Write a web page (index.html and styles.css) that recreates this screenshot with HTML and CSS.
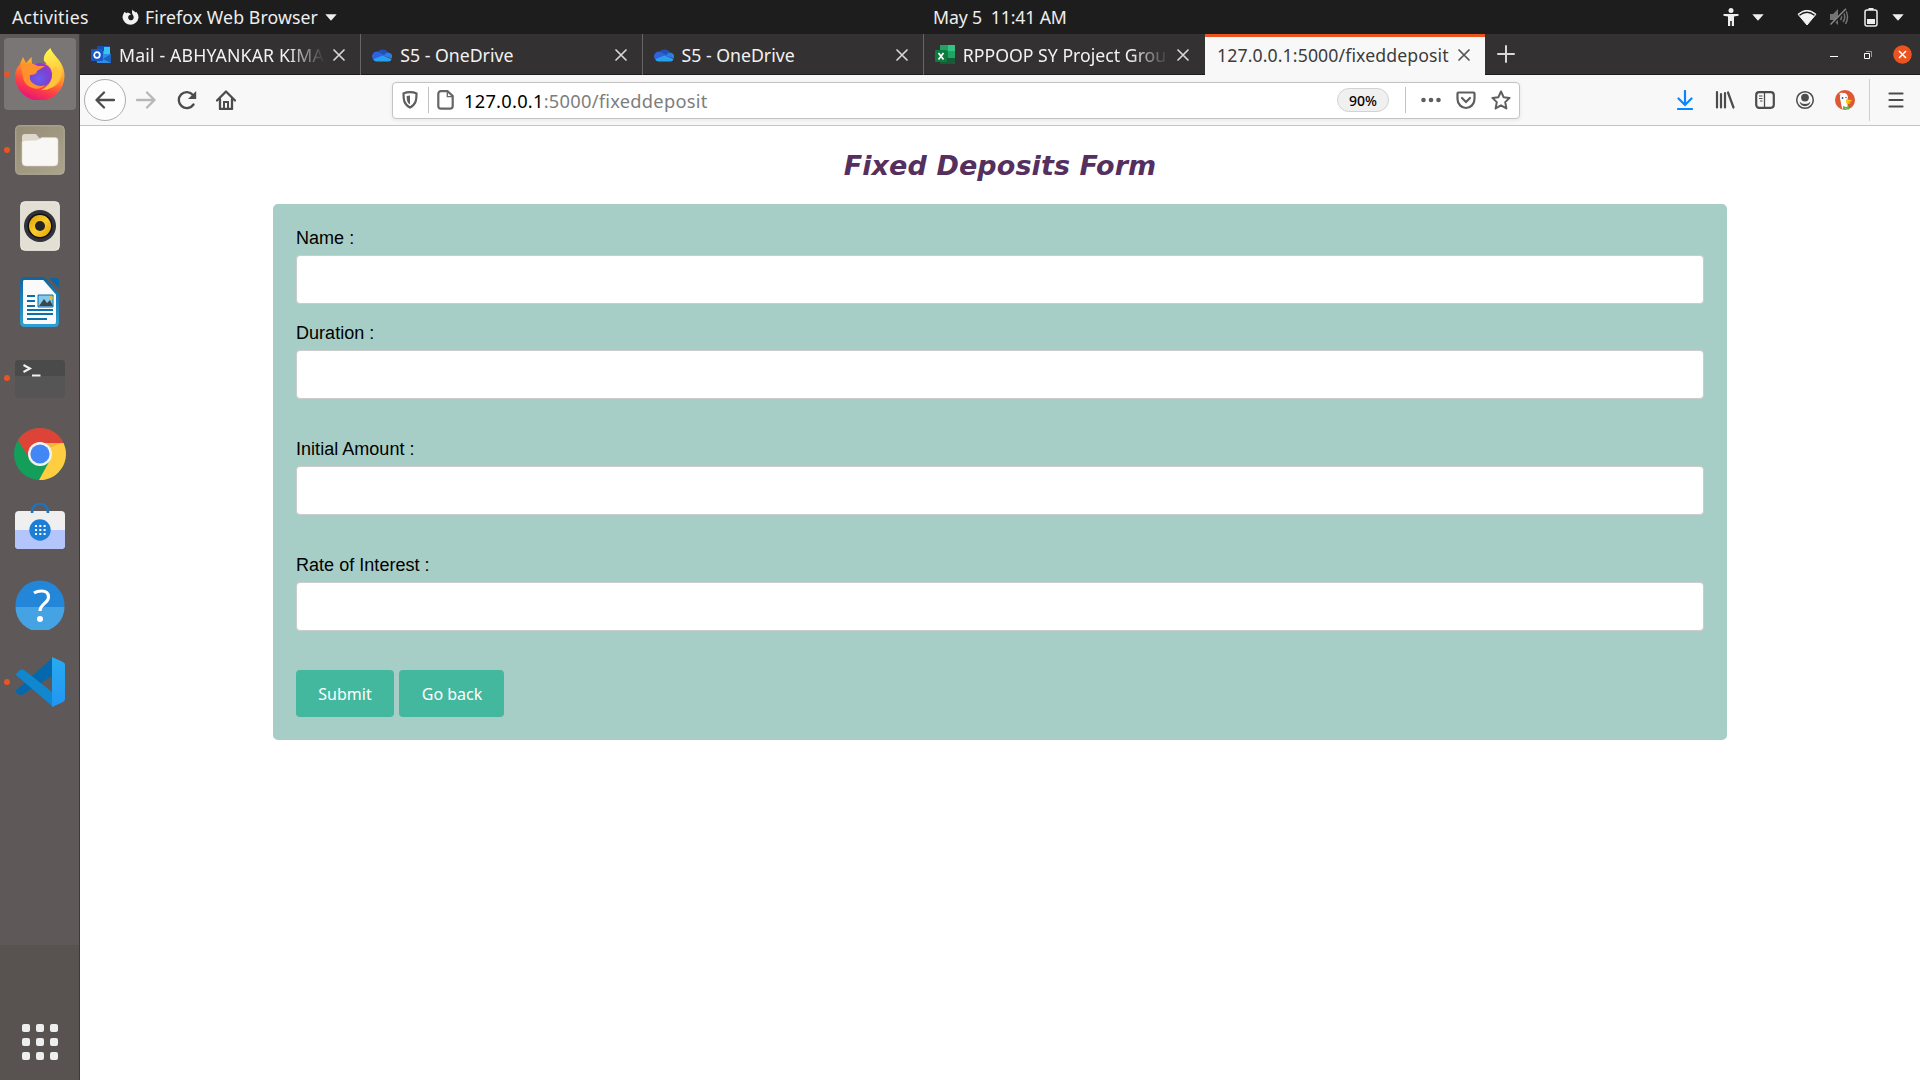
FILE: index.html
```html
<!DOCTYPE html>
<html lang="en">
<head>
<meta charset="utf-8">
<title>Fixed Deposits Form</title>
<link rel="stylesheet" href="styles.css">
</head>
<body>
<svg class="defs" width="0" height="0">
  <defs>
    <linearGradient id="fxBody" x1=".75" y1="0" x2=".35" y2="1"><stop offset="0" stop-color="#fff14f"/><stop offset=".4" stop-color="#ffa22a"/><stop offset=".72" stop-color="#ff453f"/><stop offset="1" stop-color="#e8117a"/></linearGradient>
    <linearGradient id="fxFlame" x1=".5" y1="0" x2=".7" y2="1"><stop offset="0" stop-color="#fff44f"/><stop offset="1" stop-color="#ffb02e"/></linearGradient>
    <radialGradient id="fxGlobe" cx=".45" cy=".65" r=".7"><stop offset="0" stop-color="#6a5cf0"/><stop offset=".6" stop-color="#7a42cf"/><stop offset="1" stop-color="#a432dc"/></radialGradient>
    <linearGradient id="gold" x1="0" y1="0" x2="1" y2="1"><stop offset="0" stop-color="#d99b08"/><stop offset=".5" stop-color="#fccd2a"/><stop offset="1" stop-color="#dfa20c"/></linearGradient>
    <linearGradient id="writerEdge" x1="0" y1="0" x2="0" y2="1"><stop offset="0" stop-color="#0f669f"/><stop offset="1" stop-color="#2e9fd4"/></linearGradient>
    <linearGradient id="files" x1="0" y1="0" x2="1" y2="1"><stop offset="0" stop-color="#958c75"/><stop offset="1" stop-color="#aca38d"/></linearGradient>
    <linearGradient id="codeBlue" x1="0" y1="0" x2="0" y2="1"><stop offset="0" stop-color="#29aaf0"/><stop offset="1" stop-color="#2196f3"/></linearGradient>
    <symbol id="cloud" viewBox="0 0 20 14">
      <path d="M5 5a6 5.600 0 0 1 11-.2L10 9z" fill="#2150b8"/>
      <path d="M1 11a4.600 4.600 0 0 1 5.500-7L14 8 3 12.500z" fill="#2f62dc"/>
      <path d="M13 6a4 4 0 0 1 7 3.500v1L12 8z" fill="#2d7ce6"/>
      <path d="M1.200 11.200 10.500 7.500l9 3.600A3 3 0 0 1 17 13.500H4.500a4 4 0 0 1-3.300-2.300z" fill="#28a0ee"/>
    </symbol>
    <symbol id="cross" viewBox="0 0 12 12"><path d="M1 1l10 10M11 1L1 11" fill="none" stroke="currentColor" stroke-width="1.700" stroke-linecap="round"/></symbol>
    <symbol id="caret" viewBox="0 0 12 7"><path d="M.3.300h11.400L6 6.700z" fill="currentColor"/></symbol>
  </defs>
</svg>
<div class="desktop">
  <header class="panel">
    <span class="activities">Activities</span>
    <div class="app-menu">
      <svg class="app-icon" viewBox="0 0 16 16"><path d="M2.500 2.600 4 3.900c.5-.3 1-.5 1.600-.5L8.600 5 6.500 6.100C5 8 6.300 10.600 8.300 10.600c2.200 0 3.300-2.300 2.400-4.100C10.300 5.400 8.700 4.300 9.800.500c.5 1.300 2 1.700 3.200 2.800l.4-.6c1.500 1.700 2.300 3.500 2.100 5.800a7.600 7.600 0 0 1-15-.2c-.1-2.200.8-3.700 2-5.700z" fill="#f2f2f2"/></svg>
      <span class="app-name">Firefox Web Browser</span>
      <svg class="caret"><use href="#caret"/></svg>
    </div>
    <span class="clock">May 5&nbsp; 11:41 AM</span>
    <div class="status">
      <svg width="16" height="18" viewBox="0 0 16 18"><circle cx="8" cy="2.600" r="2.500" fill="#eee"/><path d="M.5 6h15v1.700l-4.500.7V18H8.800v-5H7.200v5H5V8.400L.5 7.700z" fill="#eee"/></svg>
      <svg class="caret c1"><use href="#caret"/></svg>
      <svg class="wifi" width="20" height="17" viewBox="0 0 20 17"><path d="M1 5.200Q10-2.500 19 5.200L10 16z" fill="#f2f2f2" stroke="#f2f2f2"/><path d="M2.500 6.200q7.500-6 15 0" fill="none" stroke="#1d1d1d" stroke-width="1.400"/></svg>
      <svg class="vol" width="20" height="18" viewBox="0 0 20 18"><path d="M1 6h3l5-5v16l-5-5H1z" fill="#737373"/><path d="M11.500 6q2 3 0 6M14 4q3.500 5 0 10M16.500 2q4 7 0 14" fill="none" stroke="#737373" stroke-width="1.500"/><path d="M2 17.500 17.500 1" stroke="#1d1d1d" stroke-width="2.500"/><path d="M1.500 16.500 17 .700" stroke="#8a8a8a" stroke-width="1.400"/></svg>
      <svg class="bat" width="14" height="19" viewBox="0 0 14 19"><path d="M4.500 0h5v2h-5z" fill="#eee"/><rect x="1" y="2" width="12" height="16" rx="2" fill="none" stroke="#eee" stroke-width="1.500"/><path d="M3 11h8v5H3z" fill="#eee"/></svg>
      <svg class="caret c2"><use href="#caret"/></svg>
    </div>
  </header>
  <div class="workspace">
    <nav class="dock">
      <div class="dock-item active running">
        <svg width="52" height="52" viewBox="0 0 52 52"><path d="M5 18 9 9l3 6 5.500-6 .5 8 14-1c-2-6 1-12 4.500-15 1 5 5 9 6.500 14l1-4c4 5 6.500 10 6.500 17a24.700 24.700 0 0 1-49.500 0c0-4 1-7 3.500-10z" fill="url(#fxBody)"/><path d="M30 13C29 7 33 3 36.500 0 38 7 48 10 48 24c0 10-8 18-17 16 10-3 13-17-1-27z" fill="url(#fxFlame)"/><circle cx="26" cy="27" r="12" fill="url(#fxGlobe)"/><path d="M7 17 17 15l7 3h7l-8 5c0 3-4 4-7 4-2 8 8 13 15 10-7 8-21 2-22-8z" fill="#ff922c"/><path d="m34 12 4 9q3-1 4-3 5 8 1 16-6 9-16 8 9-4 11-12 1-11-4-18z" fill="#ffc53a"/></svg>
      </div>
      <div class="dock-item running">
        <svg width="50" height="50" viewBox="0 0 50 50"><rect x=".7" y=".7" width="48.600" height="48.600" rx="4" fill="url(#files)" stroke="#b5ae9d"/><path d="M7 27V12q0-3 3-3h11l4 5v13z" fill="#ddd8cb"/><path d="M7 17q0-1 3-1.500l12-.5 5-2.500h13q3 0 3 3V37q0 4-4 4H11q-4 0-4-4z" fill="#f8f7f5" stroke="#d8d3c6" stroke-width=".6"/></svg>
      </div>
      <div class="dock-item">
        <svg width="40" height="50" viewBox="0 0 40 50"><rect x=".7" y=".7" width="38.600" height="48.600" rx="4" fill="#e3dfd4" stroke="#f1eee5"/><circle cx="20" cy="25" r="16" fill="#31323b"/><circle cx="20" cy="25" r="12.500" fill="#111"/><circle cx="20" cy="25" r="11" fill="url(#gold)"/><circle cx="20" cy="25" r="5" fill="#252525"/></svg>
      </div>
      <div class="dock-item">
        <svg width="40" height="50" viewBox="0 0 40 50"><path d="M4 1.500h20L37.500 17v28q0 3.500-3 3.500H5q-3.500 0-3.500-3.500V5q0-3.500 2.500-3.500z" fill="#fafafa" stroke="url(#writerEdge)" stroke-width="3"/><path d="M29 1h7q3 0 3 3v7z" fill="#0d65a4"/><path d="M7 19h8M7 24h8M7 29h8M7 33h26M7 37h26M7 42h20" stroke="#0d6faa" stroke-width="2"/><path d="M18 18h15v12H18z" fill="#84c9ee" stroke="#0d6faa"/><path d="m19 29 5-7 3 4 3-3 3 6z" fill="#3f4447"/><circle cx="31" cy="21" r="2" fill="#e8bd35"/></svg>
      </div>
      <div class="dock-item running terminal">
        <svg width="50" height="38" viewBox="0 0 50 38"><rect width="50" height="38" rx="4" fill="#555"/><path d="M0 16V4q0-4 4-4h42q4 0 4 4v12z" fill="#4a4a4a"/><path d="m8.500 5 6.500 3.500L8.500 12M17 15.500h8.500" fill="none" stroke="#f2f2f2" stroke-width="2"/></svg>
      </div>
      <div class="dock-item">
        <svg width="52" height="52" viewBox="0 0 52 52"><circle cx="26" cy="26" r="26" fill="#139e5a"/><path d="M4 12A26 26 0 0 1 49.500 15H26L16 32z" fill="#dd4437"/><path d="M26 15h23.500A26 26 0 0 1 25 52l11-20z" fill="#ffcd40"/><path d="M26 15h22l-13 5z" fill="#e5a82b" opacity=".6"/><circle cx="26" cy="26" r="12" fill="#f2f2f2"/><circle cx="26" cy="26" r="9.600" fill="#4386f5"/></svg>
      </div>
      <div class="dock-item software">
        <svg width="50" height="48" viewBox="0 0 50 48"><rect y="9" width="50" height="38" rx="4" fill="#efefef"/><path d="M0 28h50v15q0 4-4 4H4q-4 0-4-4z" fill="#b3c5fb"/><path d="M17 11q0-9 8-9t8 9" fill="none" stroke="#1f72b8" stroke-width="2.600"/><circle cx="25" cy="28" r="10.700" fill="#1b7fd7"/><path d="M20 24h11M20 28h11M20 32h11" stroke="#fff" stroke-width="2" stroke-dasharray="2 2.300"/></svg>
      </div>
      <div class="dock-item help">
        <svg width="50" height="50" viewBox="0 0 50 50"><circle cx="25" cy="25" r="24.500" fill="#2386d8"/><path d="M.5 27h49a24.500 24.500 0 0 1-49 0z" fill="#45a2e3"/><path d="M19 13q3-2 7.500-2c5 0 7 2.500 7 6 0 6-8.500 7-8.500 14" fill="none" stroke="#fff" stroke-width="3.200"/><circle cx="25" cy="39" r="3" fill="#fff"/></svg>
      </div>
      <div class="dock-item running">
        <svg width="50" height="50" viewBox="0 0 50 50"><path d="m1 33 5-4L37 1v18L7 38q-2 1-4-1l-2-2z" fill="#0668ac"/><path d="m1 17 4-4q2-1 4 0l28 22v14L1 18z" fill="#1187cf"/><path d="m37 0 11 5q2 1 2 3v34q0 2-2 3l-11 5z" fill="url(#codeBlue)"/></svg>
      </div>
      <div class="show-apps"><i></i><i></i><i></i><i></i><i></i><i></i><i></i><i></i><i></i></div>
    </nav>
    <section class="browser">
      <div class="tabs">
        <div class="tab">
          <svg class="favicon" viewBox="0 0 20 20"><path d="M6 2h13v8H6z" fill="#1aa8ea"/><path d="M6 1h13v5H6z" fill="#174fae"/><path d="M13 2h6v7h-6z" fill="#36c5f2"/><path d="M5 9h15v8q0 1-1 1H6z" fill="#2e8de4"/><path d="m20 9-8 5 8 4z" fill="#1e62be"/><rect y="4" width="12" height="12" rx="1" fill="#1759c9"/><circle cx="6" cy="10" r="2.800" fill="none" stroke="#fff" stroke-width="1.700"/></svg>
          <span class="title fade mail">Mail - ABHYANKAR KIMA</span><svg class="close"><use href="#cross"/></svg>
        </div>
        <div class="tab">
          <svg class="favicon" viewBox="0 0 20 14"><use href="#cloud"/></svg>
          <span class="title drive">S5 - OneDrive</span><svg class="close"><use href="#cross"/></svg>
        </div>
        <div class="tab">
          <svg class="favicon" viewBox="0 0 20 14"><use href="#cloud"/></svg>
          <span class="title drive">S5 - OneDrive</span><svg class="close"><use href="#cross"/></svg>
        </div>
        <div class="tab">
          <svg class="favicon" viewBox="0 0 20 20"><path d="M5 0h15v19H5z" fill="#107c41"/><path d="M5 0h8v6H5z" fill="#21a366"/><path d="M13 0h7v6h-7z" fill="#33c481"/><path d="M13 6h7v7h-7z" fill="#21a366"/><path d="M5 13h15v6H5z" fill="#185c37"/><rect y="5" width="12" height="12" rx="1" fill="#0f7a3e"/><path d="m3.500 8 5 6.500m0-6.500-5 6.500" stroke="#fff" stroke-width="1.700"/></svg>
          <span class="title fade sheet">RPPOOP SY Project Grou</span><svg class="close"><use href="#cross"/></svg>
        </div>
        <div class="tab current"><span class="title local">127.0.0.1:5000/fixeddeposit</span><svg class="close"><use href="#cross"/></svg></div>
        <svg class="new-tab" width="18" height="18" viewBox="0 0 18 18"><path d="M9 1v16M1 9h16" stroke="#d8d8d8" stroke-width="2" stroke-linecap="round"/></svg>
        <div class="window-controls">
          <svg width="8" height="6" viewBox="0 0 8 6"><path d="M0 4.500h8" stroke="#fff"/></svg>
          <svg width="8" height="8" viewBox="0 0 8 8"><path d="M2 .5h5.500V6" fill="none" stroke="#999"/><path d="M.5 2.500h5v5h-5z" fill="none" stroke="#fff"/></svg>
          <svg width="19" height="19" viewBox="0 0 19 19"><circle cx="9.500" cy="9.500" r="9.300" fill="#e95420"/><path d="m6 6 7 7m0-7-7 7" stroke="#fff" stroke-width="1.500"/></svg>
        </div>
      </div>
      <div class="toolbar">
        <div class="nav-buttons">
          <span class="back"><svg width="20" height="18" viewBox="0 0 20 18"><path d="M19 9H2M9 1.500 1.500 9 9 16.500" fill="none" stroke="#4c4c4c" stroke-width="2.300" stroke-linecap="round" stroke-linejoin="round"/></svg></span>
          <svg class="forward" width="20" height="18" viewBox="0 0 20 18"><path d="M1 9h17M11 1.500 18.500 9 11 16.500" fill="none" stroke="#b7b7b7" stroke-width="2.300" stroke-linecap="round" stroke-linejoin="round"/></svg>
          <svg class="reload" width="20" height="20" viewBox="0 0 20 20"><path d="M16.500 14.500a8 8 0 1 1-.5-9.500" fill="none" stroke="#4c4c4c" stroke-width="2.400" stroke-linecap="round"/><path d="M19.200 1v8H11z" fill="#4c4c4c"/></svg>
          <svg class="home" width="20" height="20" viewBox="0 0 20 20"><path d="M1 10.500 10 1.500l9 9M4 9v10h12V9" fill="none" stroke="#4c4c4c" stroke-width="2.300" stroke-linecap="round" stroke-linejoin="round"/><path d="M8 19v-7h4v7" fill="none" stroke="#4c4c4c" stroke-width="2"/></svg>
        </div>
        <div class="urlbar">
          <svg class="shield" width="16" height="18" viewBox="0 0 16 18"><path d="M8 1.200c2.500 0 4.500.3 6.500 1.200 0 6 0 10.500-6.500 14.200C1.500 12.900 1.500 8.400 1.500 2.400 3.500 1.500 5.500 1.200 8 1.200z" fill="none" stroke="#5e5e5e" stroke-width="2.200"/><path d="M8 4.500v9C5 11.500 4.700 9 4.700 5z" fill="#5e5e5e"/></svg>
          <i class="divider"></i>
          <svg class="page" width="17" height="20" viewBox="0 0 17 20"><path d="M4 1.200h6.500L15.700 6v10q0 2.700-2.700 2.700H4q-2.700 0-2.700-2.700V4Q1.300 1.200 4 1.200z" fill="none" stroke="#666" stroke-width="2.200"/><path d="M10.300 1.500v5.200h5" fill="none" stroke="#666" stroke-width="1.300"/></svg>
          <span class="url"><b>127.0.0.1</b>:5000/fixeddeposit</span>
          <span class="zoom-level"><em>90%</em></span>
          <i class="divider"></i>
          <svg class="more" width="20" height="6" viewBox="0 0 20 6"><g fill="#5e5e5e"><circle cx="2.500" cy="3" r="2.300"/><circle cx="10" cy="3" r="2.300"/><circle cx="17.500" cy="3" r="2.300"/></g></svg>
          <svg class="pocket" width="20" height="20" viewBox="0 0 20 20"><path d="M2.500 2.500h15q1 0 1 1V9c0 5-4 9-8.500 9S1.500 14 1.500 9V3.500q0-1 1-1z" fill="none" stroke="#5e5e5e" stroke-width="2.200"/><path d="m6 8 4 4 4-4" fill="none" stroke="#5e5e5e" stroke-width="2.200" stroke-linecap="round"/></svg>
          <svg class="star" width="20" height="20" viewBox="0 0 20 20"><path d="m10 1.500 2.600 5.700 6 .7-4.400 4.200 1.200 6.300-5.400-3.100-5.400 3.100 1.200-6.300L1.400 7.900l6-.7z" fill="none" stroke="#5e5e5e" stroke-width="2" stroke-linejoin="round"/></svg>
        </div>
        <div class="tools">
          <svg width="20" height="20" viewBox="0 0 20 20"><path d="M10 1v13M3.500 8.500 10 15l6.500-6.500M3 19h14" fill="none" stroke="#0a84ff" stroke-width="2.200" stroke-linecap="round"/></svg>
          <svg width="20" height="20" viewBox="0 0 20 20"><path d="M2 2v15.500M6 4v13.500M10 3v14.500M13 2.500l5.500 15" fill="none" stroke="#4c4c4c" stroke-width="2.200" stroke-linecap="round"/></svg>
          <svg width="20" height="20" viewBox="0 0 20 20"><rect x="1.200" y="2.200" width="17.600" height="15.600" rx="3" fill="none" stroke="#4c4c4c" stroke-width="2.200"/><path d="M9.500 2v16" stroke="#4c4c4c" stroke-width="1.300"/><path d="M4 6h3.500M4 8.500h3.500M5 11h2.500" stroke="#4c4c4c"/></svg>
          <svg width="20" height="20" viewBox="0 0 20 20"><circle cx="10" cy="10" r="8.300" fill="none" stroke="#4c4c4c" stroke-width="1.500"/><circle cx="10" cy="7.600" r="3.900" fill="#4c4c4c"/><path d="M4.500 11.500q2 2.500 5.500 2.500t5.500-2.500q-1 4.500-5.500 4.700-4.500-.2-5.500-4.700z" fill="#4c4c4c"/></svg>
          <svg width="20" height="20" viewBox="0 0 20 20"><circle cx="10" cy="10" r="10" fill="#de5833"/><path d="M7 18.500 5 8q-.5-4 3-5 4-.5 5 4l-1 4 1 7q-3 2-6 .500z" fill="#fff"/><path d="M4 4q2-2 4-1L6 5z" fill="#fff"/><path d="M11 9.500q4 0 6 .8-1 2-4 1.400 2 1.300 3 1-2 2-5 0z" fill="#fdc70e"/><path d="m8 16 3 1 3-1v3.500l-3-1-3 1z" fill="#5fb445"/><circle cx="7.500" cy="8" r=".9" fill="#2d4f8e"/><circle cx="11" cy="7.500" r=".7" fill="#2d4f8e"/></svg>
          <i class="tool-divider"></i>
          <svg class="menu" width="16" height="16" viewBox="0 0 16 16"><path d="M1.500 1.500h13M1.500 8h13M1.500 14.500h13" stroke="#4c4c4c" stroke-width="2.200" stroke-linecap="round"/></svg>
        </div>
      </div>
      <main class="page-body">
        <h1>Fixed Deposits Form</h1>
        <form class="deposit-form">
          <div class="field"><label for="name">Name :</label><input id="name" type="text"></div>
          <div class="field spaced"><label for="duration">Duration :</label><input id="duration" type="text"></div>
          <div class="field spaced"><label for="amount">Initial Amount :</label><input id="amount" type="text"></div>
          <div class="field spaced"><label for="rate">Rate of Interest :</label><input id="rate" type="text"></div>
          <div class="actions"><button type="button" class="submit"><span>Submit</span></button><button type="button" class="go-back"><span>Go back</span></button></div>
        </form>
      </main>
    </section>
  </div>
</div>
</body>
</html>
```
FILE: styles.css
```css
* { box-sizing: border-box; }
body { margin: 0; background: #fff; font-family: "Noto Sans", sans-serif; overflow: hidden; }
svg { display: block; flex: none; }
.defs { position: absolute; }
.desktop { width: 1920px; height: 1080px; display: flex; flex-direction: column; }

/* Top panel */
.panel { height: 34px; flex: none; background: #1d1d1d; color: #eee; display: grid; grid-template-columns: 122px 811px 1fr auto; align-items: center; font-size: 17.700px; line-height: 34px; white-space: nowrap; }
.activities { padding-left: 12px; letter-spacing: .3px; }
.app-menu { display: flex; align-items: center; }
.app-icon { width: 17px; height: 17px; margin: 0 6px 0 0; }
.app-name { width: 180px; letter-spacing: .1px; }
.caret { width: 12px; height: 7px; }
.clock { letter-spacing: -.16px; }
.status { display: flex; align-items: center; padding-right: 16px; }
.c1 { margin-left: 13px; }
.wifi { margin-left: 33px; }
.vol { margin-left: 12px; }
.bat { margin-left: 15px; }
.c2 { margin-left: 14px; }

.workspace { display: flex; flex: 1; min-height: 0; }

/* Dock */
.dock { width: 80px; flex: none; padding-top: 2px; background: linear-gradient(#5e5958 0 911px, #585250 911px); border-right: 1px solid #3c3939; display: flex; flex-direction: column; }
.dock-item { height: 76px; display: flex; align-items: center; justify-content: center; position: relative; padding-left: 1px; }
.dock-item.active { height: 72px; margin: 2px 3px 2px 4px; padding-left: 0; background: #7a7675; border-radius: 4px; }
.running::before { content: ""; position: absolute; left: 4px; top: 50%; width: 6px; height: 6px; margin-top: -3px; border-radius: 50%; background: #e95420; }
.active.running::before { left: 0; }
.terminal { padding-top: 2px; }
.software { padding-bottom: 8px; }
.help { padding-bottom: 2px; }
.show-apps { margin: auto auto 20px; padding-left: 1px; display: grid; grid-template-columns: repeat(3, 8px); grid-auto-rows: 8px; gap: 6px; }
.show-apps i { background: #eee; border-radius: 2px; }

/* Browser chrome */
.browser { flex: 1; min-width: 0; display: flex; flex-direction: column; }
.tabs { height: 41px; flex: none; display: flex; background: #333132; box-shadow: inset 0 -1px #1e1d1e; color: #f2f2f2; font-size: 17.700px; }
.tab { width: 281.250px; flex: none; display: flex; align-items: center; padding: 0 15px 0 11px; border-right: 1px solid #666; }
.tab:nth-child(4) { border-right: 0; padding-right: 16px; }
.tab.current { width: 280px; background: #f8f8f8; border-top: 3px solid #e95420; border-right: 0; color: #3c3c3c; padding-bottom: 3px; padding-left: 12px; }
.favicon { width: 20px; height: 20px; margin-right: 8px; }
.title { flex: 1; min-width: 0; white-space: nowrap; line-height: 30px; }
.fade { -webkit-mask-image: linear-gradient(90deg, #000 82%, transparent); mask-image: linear-gradient(90deg, #000 82%, transparent); }
.mail { letter-spacing: .15px; }
.local { letter-spacing: .1px; }
.close { width: 12px; height: 12px; margin-left: 8px; color: #d6d6d6; }
.current .close { color: #555; }
.new-tab { margin: 11px 0 0 12px; }
.window-controls { margin-left: auto; padding-right: 8px; display: flex; align-items: center; height: 41px; }
.window-controls svg:nth-child(2) { margin: 0 21px 0 26px; }

.toolbar { height: 51px; flex: none; background: #f8f8f8; border-bottom: 1px solid #c4c4c4; display: flex; align-items: center; }
.nav-buttons { width: 312px; display: flex; align-items: center; padding-left: 4px; }
.back { width: 42px; height: 42px; border: 1px solid #adadad; border-radius: 50%; background: #fdfdfd; display: grid; place-items: center; }
.forward { margin-left: 10px; }
.reload { margin-left: 21px; }
.home { margin-left: 19px; }
.urlbar { width: 1128px; height: 37px; border: 1px solid #c3c3c3; border-radius: 4px; background: #fff; box-shadow: 0 1px 4px rgba(0,0,0,.08); display: flex; align-items: center; padding: 0 8px 0 9px; }
.divider { width: 1px; height: 26px; background: #c2c2c2; }
.shield { margin-right: 10px; }
.page { margin: 0 10px 0 8px; }
.url { flex: 1; color: #7d7d7d; font-size: 18.300px; letter-spacing: .25px; white-space: nowrap; }
.url b { font-weight: 400; color: #000; }
.zoom-level { width: 52px; height: 24px; border: 1px solid #d2d2d2; border-radius: 12px; background: #f0f0f0; display: grid; place-items: center; margin-right: 16px; font-size: 14px; font-weight: 500; }
.zoom-level em { font-style: normal; }
.more { margin-left: 15px; }
.pocket { margin-left: 15px; }
.star { margin-left: 15px; }
.tools { margin-left: auto; display: flex; align-items: center; gap: 20px; padding-right: 16px; }
.tool-divider { width: 1px; height: 42px; background: #cecece; margin: 0 -2px 0 -6px; }

/* Page */
.page-body { flex: 1; background: #fff; }
h1 { margin: 22px 0 21px; height: 35px; text-align: center; font: italic bold 27px/35px "DejaVu Sans", sans-serif; letter-spacing: .1px; color: #55305f; }
.deposit-form { width: 1454px; height: 536px; margin: 0 auto; background: #a7cec6; border-radius: 5px; padding: 19px 23px 0; }
.field { display: flex; flex-direction: column; height: 95px; font: 18px/30px "Liberation Sans", Arial, sans-serif; color: #000; }
.field label { height: 32px; letter-spacing: .03px; }
.field input { width: 100%; height: 49px; border: 1px solid #ccc; border-radius: 4px; background: #fff; padding: 0 12px; }
.spaced { height: 116px; }
.actions { display: flex; gap: 5px; margin-top: 4px; }
button { height: 47px; border: 0; border-radius: 4px; padding: 1px 0 0; background: #43b89f; color: #fff; font: 16px/46px "Noto Sans", sans-serif; white-space: nowrap; }
.submit { width: 98px; }
.go-back { width: 105px; padding-left: 1px; }
```
